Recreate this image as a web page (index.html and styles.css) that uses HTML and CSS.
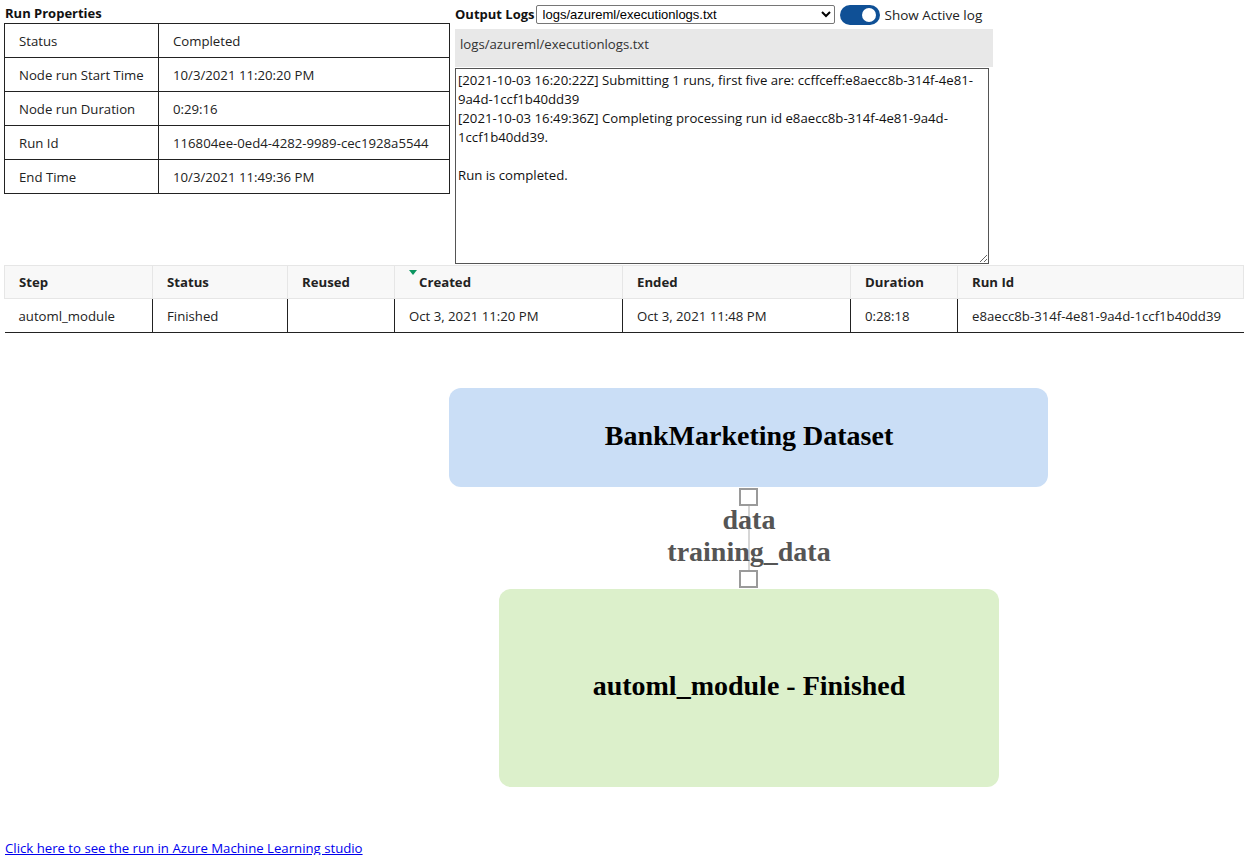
FILE: index.html
```html
<!DOCTYPE html>
<html>
<head>
<meta charset="utf-8">
<link rel="stylesheet" href="styles.css">
</head>
<body>
<div class="page">
  <div class="top">
    <section class="props">
      <div class="title">Run Properties</div>
      <table class="ptable">
        <tr><td class="k">Status</td><td>Completed</td></tr>
        <tr><td class="k">Node run Start Time</td><td>10/3/2021 11:20:20 PM</td></tr>
        <tr><td class="k">Node run Duration</td><td>0:29:16</td></tr>
        <tr><td class="k">Run Id</td><td>116804ee-0ed4-4282-9989-cec1928a5544</td></tr>
        <tr><td class="k">End Time</td><td>10/3/2021 11:49:36 PM</td></tr>
      </table>
    </section>
    <section class="logs">
      <div class="logbar">
        <span class="title">Output Logs</span>
        <select class="sel"><option>logs/azureml/executionlogs.txt</option></select>
        <span class="toggle"><span class="knob"></span></span>
        <span class="tlabel">Show Active log</span>
      </div>
      <div class="logname">logs/azureml/executionlogs.txt</div>
      <textarea class="logtext" readonly>[2021-10-03 16:20:22Z] Submitting 1 runs, first five are: ccffceff:e8aecc8b-314f-4e81-9a4d-1ccf1b40dd39
[2021-10-03 16:49:36Z] Completing processing run id e8aecc8b-314f-4e81-9a4d-1ccf1b40dd39.

Run is completed.</textarea>
    </section>
  </div>

  <table class="steps">
    <colgroup>
      <col style="width:148px"><col style="width:135px"><col style="width:107px"><col style="width:228px"><col style="width:228px"><col style="width:107px"><col>
    </colgroup>
    <thead>
      <tr><th>Step</th><th>Status</th><th>Reused</th><th class="sorted"><span class="arrow"></span>Created</th><th>Ended</th><th>Duration</th><th>Run Id</th></tr>
    </thead>
    <tbody>
      <tr><td>automl_module</td><td>Finished</td><td></td><td>Oct 3, 2021 11:20 PM</td><td>Oct 3, 2021 11:48 PM</td><td>0:28:18</td><td>e8aecc8b-314f-4e81-9a4d-1ccf1b40dd39</td></tr>
    </tbody>
  </table>

  <div class="graph">
    <svg width="1244" height="460" viewBox="0 0 1244 460">
      <rect x="449" y="38" width="599" height="99" rx="12" fill="#cadef6"/>
      <text x="749" y="95" class="nodelabel">BankMarketing Dataset</text>
      <line x1="749" y1="147" x2="749" y2="230" stroke="#c8c8c8" stroke-width="1.5"/>
      <rect x="740" y="139" width="17" height="16" fill="#fff" stroke="#9a9a9a" stroke-width="2"/>
      <text x="749" y="179" class="edgelabel">data</text>
      <text x="749" y="211" class="edgelabel">training_data</text>
      <rect x="740" y="221" width="17" height="16" fill="#fff" stroke="#9a9a9a" stroke-width="2"/>
      <rect x="499" y="239" width="500" height="198" rx="12" fill="#dcf0cb"/>
      <text x="749" y="345" class="nodelabel">automl_module - Finished</text>
    </svg>
  </div>

  <a class="studio" href="#">Click here to see the run in Azure Machine Learning studio</a>
</div>
</body>
</html>
```

FILE: styles.css
```css
html, body {
  margin: 0;
  padding: 0;
  background: #fff;
}
.page {
  font-family: "Open Sans", "Noto Sans", sans-serif;
  font-size: 13.2px;
  color: #222;
  padding: 0 0 0 4px;
  width: 1240px;
}
.top {
  display: flex;
  gap: 5px;
  align-items: flex-start;
}
.props {
  width: 446px;
  padding-top: 4px;
}
.title {
  font-weight: 700;
  font-size: 13px;
  color: #111;
  line-height: 19px;
  padding-left: 1px;
}
.ptable {
  border-collapse: collapse;
  width: 446px;
}
.ptable td {
  border: 1px solid #222;
  height: 34px;
  padding: 0 0 0 14px;
  box-sizing: border-box;
}
.ptable td.k {
  width: 154px;
}
.logs {
  width: 538px;
  padding-top: 4px;
}
.logbar {
  display: flex;
  align-items: center;
  height: 21px;
}
.logbar .title {
  padding-left: 0;
}
.sel {
  margin-left: 1px;
  width: 299px;
  height: 19px;
  font-family: "Liberation Sans", Arial, sans-serif;
  font-size: 13px;
  border: 1px solid #767676;
  border-radius: 2px;
  background: #fff;
  color: #000;
  padding: 0 0 0 2px;
}
.toggle {
  margin-left: 5px;
  width: 40px;
  height: 20px;
  border-radius: 10px;
  background: #0f5096;
  position: relative;
  display: inline-block;
}
.knob {
  position: absolute;
  right: 4px;
  top: 3px;
  width: 14px;
  height: 14px;
  border-radius: 50%;
  background: #fff;
}
.tlabel {
  margin-left: 5px;
  font-size: 13.5px;
  color: #222;
}
.logname {
  margin-top: 4px;
  background: #e8e8e8;
  height: 38px;
  line-height: 30px;
  padding-left: 5px;
  color: #333;
}
.logtext {
  display: block;
  margin-top: 1px;
  width: 534px;
  height: 196px;
  box-sizing: border-box;
  border: 1px solid #555;
  border-radius: 0;
  padding: 2px 2px;
  font-family: "Open Sans", "Noto Sans", sans-serif;
  font-size: 13.2px;
  line-height: 19px;
  color: #111;
  resize: both;
  overflow: hidden;
}
.steps {
  margin-top: 1px;
  border-collapse: collapse;
  width: 1240px;
  table-layout: fixed;
}
.steps th {
  text-align: left;
  font-weight: 700;
  background: #f8f8f8;
  height: 33px;
  box-sizing: border-box;
  padding: 0 0 0 14px;
  border: 1px solid #e6e6e6;
  color: #222;
}
.steps td {
  height: 34px;
  box-sizing: border-box;
  padding: 0 0 0 14px;
  border-left: 1px solid #222;
  border-right: 1px solid #222;
  border-bottom: 1px solid #222;
  white-space: nowrap;
}
.steps td:first-child { border-left: none; }
.steps td:last-child { border-right: none; }
.arrow {
  display: inline-block;
  vertical-align: top;
  margin-top: -3px;
  margin-right: 2px;
  width: 0;
  height: 0;
  border-left: 4px solid transparent;
  border-right: 4px solid transparent;
  border-top: 5px solid #0a9460;
}
.graph {
  margin-left: -4px;
  height: 460px;
  margin-top: 17px;
}
.graph svg {
  display: block;
}
.nodelabel {
  font-family: "Liberation Serif", "Times New Roman", serif;
  font-weight: 700;
  font-size: 28px;
  text-anchor: middle;
  fill: #000;
}
.edgelabel {
  font-family: "Liberation Serif", "Times New Roman", serif;
  font-weight: 700;
  font-size: 28px;
  text-anchor: middle;
  fill: #555;
}
.studio {
  display: block;
  margin-top: 29px;
  padding-left: 1px;
  font-size: 13.2px;
  line-height: 18px;
  color: #0000ee;
  text-decoration: underline;
}
```
